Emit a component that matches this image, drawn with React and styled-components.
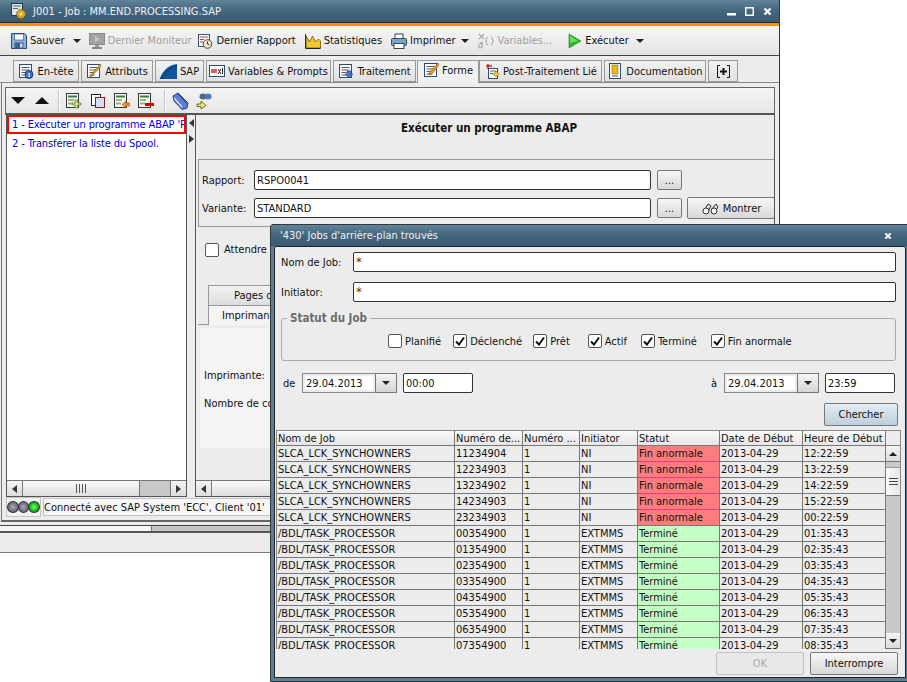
import React from 'react'
import styled, { createGlobalStyle } from 'styled-components'

const Global = createGlobalStyle`
  html, body { margin: 0; padding: 0; background: #fff; }
  body { font-family: "DejaVu Sans Condensed", "Liberation Sans", sans-serif; font-size: 11px; color: #111; }
  #root { width: 907px; height: 682px; position: relative; overflow: hidden; }
`

const Desktop = styled.div`
  position: relative;
  width: 907px;
  height: 682px;
  overflow: hidden;
`

const MainWindow = styled.div`
  position: absolute;
  left: 0;
  top: 0;
  width: 780px;
  height: 553px;
  box-sizing: border-box;
  display: flex;
  flex-direction: column;
  background: #ececec;
  border-right: 1px solid #333;
  border-bottom: 1px solid #777;
`

const TitleBar = styled.div`
  height: ${p => p.$h}px;
  flex: none;
  display: flex;
  align-items: center;
  gap: 6px;
  box-sizing: border-box;
  padding: 0 ${p => p.$pr}px 0 ${p => p.$pl}px;
  margin: 0 ${p => p.$mx || 0}px;
  background: linear-gradient(#628499, #46687f 45%, #375a72);
  color: #eef2f5;
  font-size: 11px;
  border-bottom: ${p => (p.$line ? '1px solid #1d2b35' : 'none')};
`

const TitleText = styled.span`
  flex: 1;
  white-space: nowrap;
`

const WinButtons = styled.div`
  display: flex;
  align-items: center;
  gap: 9px;
  margin-right: ${p => p.$mr || 0}px;
`

const OrangeLine = styled.div`
  height: 3px;
  flex: none;
  background: #ff9000;
`

const Toolbar = styled.div`
  height: 30px;
  flex: none;
  box-sizing: border-box;
  display: flex;
  align-items: center;
  padding-left: 11px;
  border-bottom: 1px solid #444;
  background: linear-gradient(#f6f6f6, #e4e4e4);
`

const ToolItem = styled.div`
  display: flex;
  align-items: center;
  gap: 3px;
  margin-right: ${p => p.$mr}px;
  white-space: nowrap;
  color: ${p => (p.$off ? '#a0a0a0' : '#111')};
`

const Caret = styled.span`
  width: 0;
  height: 0;
  flex: none;
  margin-right: ${p => p.$mr || 0}px;
  border-left: 4px solid transparent;
  border-right: 4px solid transparent;
  border-top: 4px solid #222;
`

const TabStrip = styled.div`
  height: 27px;
  flex: none;
  box-sizing: border-box;
  display: flex;
  align-items: flex-end;
  padding-left: 13px;
  gap: 2px;
  border-bottom: 1px solid #888;
`

const Tab = styled.div`
  height: ${p => (p.$active ? 23 : 22)}px;
  width: ${p => p.$w}px;
  margin-bottom: ${p => (p.$active ? -1 : 0)}px;
  margin-right: ${p => (p.$active ? -2 : 0)}px;
  margin-left: ${p => (p.$active ? -1 : 0)}px;
  box-sizing: border-box;
  display: flex;
  align-items: center;
  justify-content: center;
  gap: 3px;
  padding-bottom: ${p => (p.$active ? 4 : 0)}px;
  border: 1px solid #999;
  border-bottom: ${p => (p.$active ? 'none' : '1px solid #999')};
  background: ${p => (p.$active ? '#f0f0f0' : 'linear-gradient(#f2f2f2, #e0e0e0)')};
  white-space: nowrap;
  position: relative;
  z-index: ${p => (p.$active ? 1 : 0)};
`

const TabBody = styled.div`
  height: 439px;
  flex: none;
  box-sizing: border-box;
  display: flex;
  flex-direction: column;
  margin-left: 1px;
  padding: 4px 4px 0 3px;
  border-left: 1px solid #777;
  border-bottom: 2px solid #666;
`

const InnerToolbar = styled.div`
  height: 28px;
  flex: none;
  box-sizing: border-box;
  display: flex;
  align-items: center;
  border: 1px solid #666;
  border-bottom: 2px solid #555;
  background: linear-gradient(#f4f4f4, #e6e6e6);
`

const IconSlot = styled.div`
  width: ${p => p.$w}px;
  display: flex;
  justify-content: center;
  flex: none;
`

const Sep = styled.div`
  width: 1px;
  height: 22px;
  flex: none;
  margin: 0 ${p => p.$mr}px 0 ${p => p.$ml}px;
  background: #c4c4c4;
  border-right: 1px solid #fff;
`

const Panes = styled.div`
  height: 382px;
  flex: none;
  display: flex;
`

const LeftPane = styled.div`
  width: 181px;
  flex: none;
  box-sizing: border-box;
  display: flex;
  flex-direction: column;
  border: 1px solid #555;
  border-top: none;
  margin-left: 1px;
  background: #fff;
`

const TaskList = styled.div`
  flex: 1;
  min-height: 0;
  overflow: hidden;
  background: #fff;
`

const TaskRow = styled.div`
  height: ${p => (p.$selected ? 19 : 16)}px;
  box-sizing: border-box;
  display: flex;
  align-items: center;
  padding-left: ${p => (p.$selected ? 3 : 5)}px;
  margin-bottom: ${p => (p.$selected ? 1 : 0)}px;
  border: ${p => (p.$selected ? '2px solid #f00' : 'none')};
  color: #0000e6;
  letter-spacing: -0.12px;
  white-space: nowrap;
  overflow: hidden;
`

const Splitter = styled.div`
  width: 8px;
  flex: none;
  display: flex;
  flex-direction: column;
  align-items: center;
  gap: 8px;
  padding-top: 4px;
  box-sizing: border-box;
`

const SmallTri = styled.span`
  width: 0;
  height: 0;
  border-top: 4px solid transparent;
  border-bottom: 4px solid transparent;
  ${p => (p.$right ? 'border-left: 5px solid #333;' : 'border-right: 5px solid #333;')}
`

const RightPane = styled.div`
  flex: 1;
  min-width: 0;
  box-sizing: border-box;
  display: flex;
  flex-direction: column;
  border: 1px solid #555;
  border-top: none;
`

const PaneBody = styled.div`
  flex: 1;
  min-height: 0;
  overflow: hidden;
  display: flex;
  flex-direction: column;
`

const PaneTitle = styled.div`
  height: 44px;
  flex: none;
  box-sizing: border-box;
  padding-top: 6px;
  text-align: center;
  font-weight: bold;
  font-size: 11.5px;
  margin-left: 8px;
`

const ReportBox = styled.div`
  height: 68px;
  flex: none;
  box-sizing: border-box;
  margin-left: 2px;
  padding: 10px 0 0 3px;
  border: 1px solid #999;
  border-right: none;
  display: flex;
  flex-direction: column;
  gap: 8px;
`

const FormRow = styled.div`
  display: flex;
  align-items: center;
  height: 20px;
`

const RowLabel = styled.div`
  width: ${p => p.$w}px;
  flex: none;
  white-space: nowrap;
`

const TextInput = styled.div`
  width: ${p => p.$w}px;
  flex: none;
  height: 20px;
  box-sizing: border-box;
  display: flex;
  align-items: ${p => (p.$star ? 'flex-start' : 'center')};
  padding: ${p => (p.$star ? '1px 2px 0' : '0 2px')};
  background: #fff;
  border: 1px solid #333;
  border-radius: 2px;
  font-size: ${p => (p.$star ? 13 : 11)}px;
  color: ${p => (p.$star ? '#5a3a10' : '#111')};
`

const Btn = styled.div`
  width: ${p => p.$w}px;
  height: ${p => p.$h}px;
  flex: none;
  margin-left: ${p => p.$ml || 0}px;
  box-sizing: border-box;
  display: flex;
  align-items: center;
  justify-content: center;
  gap: 4px;
  border: 1px solid ${p => (p.$off ? '#c2c2c2' : '#777')};
  border-radius: 2px;
  background: ${p =>
    p.$primary
      ? 'linear-gradient(#e2edf5, #bccfdc)'
      : p.$off
        ? '#e8e8e8'
        : 'linear-gradient(#f6f6f6, #d8d8d8)'};
  color: ${p => (p.$off ? '#a8a8a8' : '#111')};
`

const WaitRow = styled.div`
  height: 58px;
  width: 75px;
  flex: none;
  display: flex;
  align-items: flex-start;
  gap: 5px;
  padding: 16px 0 0 9px;
  box-sizing: border-box;
  white-space: nowrap;
  overflow: hidden;
`

const SubTabs = styled.div`
  flex: none;
  display: flex;
  flex-direction: column;
  margin-left: 2px;
  padding-left: 10px;
  position: relative;
  &::after {
    content: '';
    position: absolute;
    left: 0;
    bottom: 0;
    width: 10px;
    height: 1px;
    background: #999;
  }
`

const SubTab = styled.div`
  height: 20px;
  box-sizing: border-box;
  width: 65px;
  padding: 3px 0 0 ${p => p.$pl}px;
  border: 1px solid #999;
  border-bottom: none;
  background: ${p => (p.$front ? '#f4f4f4' : 'linear-gradient(#f2f2f2, #dcdcdc)')};
  white-space: nowrap;
  overflow: hidden;
`

const SubBody = styled.div`
  height: 120px;
  width: 71px;
  flex: none;
  box-sizing: border-box;
  padding: 41px 0 0 4px;
  display: flex;
  flex-direction: column;
  gap: 15px;
  margin: 3px 0 0 4px;
  background: #f4f4f4;
  white-space: nowrap;
  overflow: hidden;
`

const HScroll = styled.div`
  height: 16px;
  flex: none;
  display: flex;
  background: #c8c8c8;
  border-top: 1px solid #777;
  box-sizing: border-box;
`

const ScrollBtn = styled.div`
  width: 15px;
  flex: none;
  display: flex;
  align-items: center;
  justify-content: center;
  background: linear-gradient(#f4f4f4, #dcdcdc);
  border-right: ${p => (p.$end ? 'none' : '1px solid #777')};
  border-left: ${p => (p.$end ? '1px solid #777' : 'none')};
`

const HThumb = styled.div`
  width: ${p => p.$w}px;
  flex: none;
  display: flex;
  align-items: center;
  justify-content: center;
  gap: 2px;
  background: linear-gradient(#fafafa, #dedede);
  border-right: 1px solid #777;
`

const Grip = styled.span`
  width: 1px;
  height: 9px;
  background: #555;
`

const HTrack = styled.div`
  flex: 1;
`

const StatusBar = styled.div`
  height: 20px;
  flex: none;
  display: flex;
  align-items: center;
  gap: 2px;
  margin-left: 1px;
  box-sizing: border-box;
`

const Lights = styled.div`
  width: 35px;
  height: 20px;
  flex: none;
  box-sizing: border-box;
  display: flex;
  align-items: center;
  justify-content: center;
  background: #f2f2f2;
  border: 1px solid #c4c4c4;
`

const Light = styled.span`
  width: 10px;
  height: 10px;
  border-radius: 50%;
  margin-left: ${p => (p.$first ? 0 : -1)}px;
  border: 1px solid #333;
  background: ${p => (p.$on ? 'radial-gradient(#7f7, #0a0 70%)' : 'radial-gradient(#aab, #667 70%)')};
`

const StatusText = styled.div`
  flex: 1;
  height: 18px;
  box-sizing: border-box;
  display: flex;
  align-items: center;
  padding-left: 0;
  background: #f6f6f6;
  border: 1px solid #c4c4c4;
  white-space: nowrap;
  color: #111;
`

const BottomScroll = styled.div`
  height: 5px;
  flex: none;
  margin-top: 3px;
  display: flex;
  background: #c4c4c4;
  border-top: 1px solid #444;
  border-bottom: 2px solid #555;
`

const BottomThumb = styled.div`
  width: 151px;
  background: #f6f6f6;
  border-right: 1px solid #777;
`

const Dialog = styled.div`
  position: absolute;
  left: 270px;
  top: 224px;
  width: 640px;
  height: 458px;
  box-sizing: border-box;
  display: flex;
  flex-direction: column;
  padding: 0 3px 3px;
  background: #5c7d93;
  border: 1px solid #2c3a44;
  border-radius: 3px 3px 0 0;
`

const DialogBody = styled.div`
  flex: 1;
  min-height: 0;
  display: flex;
  flex-direction: column;
  padding: 5px 7px 0 6px;
  background: #ececec;
  border: 1px solid #222;
  border-radius: 2px 2px 0 0;
`

const DialogRow = styled(FormRow)`
  margin-bottom: 10px;
`

const StatusGroup = styled.fieldset`
  width: 615px;
  height: 49px;
  box-sizing: border-box;
  margin: 0;
  padding: 0;
  border: 1px solid #aaa;
  border-radius: 3px;
`

const Legend = styled.legend`
  font-weight: bold;
  font-size: 11.5px;
  color: #6c6c6c;
  padding: 0 3px;
  margin-left: 5px;
  line-height: 12px;
`

const Checks = styled.div`
  display: flex;
  align-items: center;
  padding: 10px 0 0 106px;
`

const CheckItem = styled.label`
  display: flex;
  align-items: center;
  gap: 3px;
  margin-right: ${p => p.$mr}px;
  white-space: nowrap;
`

const Box = styled.span`
  width: 14px;
  height: 14px;
  flex: none;
  box-sizing: border-box;
  display: flex;
  align-items: center;
  justify-content: center;
  background: #fff;
  border: 1px solid #555;
  border-radius: 2px;
`

const DateRow = styled.div`
  display: flex;
  align-items: center;
  height: 20px;
  margin-top: 12px;
`

const DateLabel = styled.span`
  width: ${p => p.$w}px;
  margin-left: ${p => p.$ml || 0}px;
  flex: none;
`

const Combo = styled.div`
  width: 95px;
  height: 20px;
  flex: none;
  box-sizing: border-box;
  display: flex;
  align-items: center;
  border: 1px solid #888;
  background: #ececec;
`

const ComboValue = styled.div`
  flex: 1;
  height: 14px;
  margin-left: 2px;
  padding-left: 1px;
  background: #fff;
  display: flex;
  align-items: center;
  margin-right: 2px;
`

const ComboBtn = styled.div`
  width: 22px;
  height: 20px;
  flex: none;
  box-sizing: border-box;
  display: flex;
  align-items: center;
  justify-content: center;
  border: 1px solid #777;
  margin-right: -1px;
  background: linear-gradient(#f4f4f4, #d4d4d4);
`

const TimeInput = styled(TextInput)`
  margin-left: 6px;
`

const SearchRow = styled.div`
  display: flex;
  justify-content: flex-end;
  height: 23px;
  margin-top: 10px;
`

const TableWrap = styled.div`
  width: 625px;
  height: 219px;
  flex: none;
  margin: 4px 0 0 -5px;
  display: flex;
  box-sizing: border-box;
  border: 1px solid #888;
  border-bottom: none;
  overflow: hidden;
`

const TableGrid = styled.div`
  flex: none;
  width: 609px;
  overflow: hidden;
`

const Line = styled.div`
  display: flex;
  height: ${p => (p.$head ? 15 : 16)}px;
  box-sizing: border-box;
  border-bottom: 1px solid #777;
  background: ${p => (p.$head ? 'linear-gradient(#fafafa, #e6e6e6)' : '#ececec')};
`

const Cell = styled.div`
  width: ${p => p.$w}px;
  flex: none;
  box-sizing: border-box;
  padding-left: 1px;
  line-height: 15px;
  white-space: nowrap;
  overflow: hidden;
  border-right: 1px solid #777;
  background: ${p => (p.$state === 'bad' ? '#ff7c7c' : p.$state === 'ok' ? '#c4ffc4' : 'transparent')};
`

const VScroll = styled.div`
  flex: 1;
  display: flex;
  flex-direction: column;
  background: #c8c8c8;
`

const VHead = styled.div`
  height: 14px;
  flex: none;
  background: #ececec;
  border-bottom: 1px solid #777;
`

const VBtn = styled.div`
  height: 16px;
  flex: none;
  box-sizing: border-box;
  display: flex;
  align-items: center;
  justify-content: center;
  background: linear-gradient(#f4f4f4, #dcdcdc);
  border-bottom: 1px solid #777;
`

const VThumb = styled.div`
  height: 29px;
  flex: none;
  box-sizing: border-box;
  margin-top: 5px;
  display: flex;
  flex-direction: column;
  align-items: center;
  justify-content: center;
  gap: 2px;
  background: linear-gradient(90deg, #fafafa, #e6e6e6);
  border-top: 1px solid #999;
  border-bottom: 1px solid #777;
`

const HGrip = styled.span`
  width: 9px;
  height: 1px;
  background: #444;
`

const VTrack = styled.div`
  flex: 1;
`

const Footer = styled.div`
  display: flex;
  justify-content: flex-end;
  margin-top: 3px;
  gap: 6px;
`

const Tri = styled.span`
  width: 0;
  height: 0;
  border-left: 4px solid transparent;
  border-right: 4px solid transparent;
  ${p => (p.$up ? 'border-bottom: 4px solid #222;' : 'border-top: 4px solid #222;')}
`

const BigTri = styled.span`
  width: 0;
  height: 0;
  border-left: 7px solid transparent;
  border-right: 7px solid transparent;
  ${p => (p.$up ? 'border-bottom: 7px solid #111;' : 'border-top: 7px solid #111;')}
`

const IconSvg = styled.svg`
  flex: none;
  display: block;
`

function Ico({ w = 16, h = 16, children }) {
  return <IconSvg width={w} height={h} viewBox={`0 0 ${w} ${h}`}>{children}</IconSvg>
}

const SaveIcon = () => (
  <Ico>
    <path d="M.5.5h13l2 2v13H.5z" fill="#8fb0d8" stroke="#2c4a78" />
    <rect x="3.500" y="1" width="9" height="6" fill="#f4f7fb" stroke="#2c4a78" strokeWidth=".6" />
    <rect x="3.500" y="9.500" width="9" height="6" fill="#3c5f94" />
    <rect x="9" y="10.500" width="2.500" height="4" fill="#d4deec" />
  </Ico>
)
const MonitorIcon = () => (
  <Ico>
    <rect x=".5" y=".5" width="15" height="11" fill="#a2a2a2" stroke="#8a8a8a" />
    <path d="M6 2.500l5 3.500-5 3.500z" fill="#c4c4c4" />
    <rect x="6" y="12" width="4" height="2" fill="#9a9a9a" />
    <rect x="3" y="14" width="10" height="2" fill="#8a8a8a" />
  </Ico>
)
const ReportIcon = () => (
  <Ico>
    <rect x="1.500" y="1.500" width="11" height="12" fill="#fff" stroke="#39507a" />
    <path d="M3 4h8M3 6.500h4M3 9h3" stroke="#b04040" strokeWidth="1" />
    <circle cx="10.500" cy="11" r="4.300" fill="#f1e7c4" stroke="#444" />
    <path d="M10.500 8.500V11l2 1" stroke="#333" fill="none" />
  </Ico>
)
const StatsIcon = () => (
  <Ico>
    <path d="M1 15V3l3.500 6 3-6 3 6 3-3 2 2v7z" fill="#f0c828" stroke="#6a5008" strokeWidth=".8" />
    <path d="M.6 1v14.500h15" stroke="#222" fill="none" />
  </Ico>
)
const PrintIcon = () => (
  <Ico>
    <rect x="4" y="1" width="8" height="5" fill="#fff" stroke="#345" />
    <rect x=".5" y="5.500" width="15" height="7" rx="1" fill="#7fa2c8" stroke="#2c4a78" />
    <rect x="3" y="10.500" width="10" height="5" fill="#fff" stroke="#345" />
    <rect x="12" y="7" width="2" height="1.500" fill="#4d4" />
  </Ico>
)
const VarsIcon = () => (
  <Ico w={18} h={18}>
    <path d="M2 2l5 5M7 2l-5 5" stroke="#aaa" strokeWidth="1.200" />
    <path d="M3 11c3-2 3 5 0 5s-1-4 3-6" stroke="#aaa" fill="none" strokeWidth="1.200" />
    <path d="M11 5q-2 0-1.500 3q0 1-1 1q1 0 1 1q-.5 3 1.500 3M14 5q2 0 1.500 3q0 1 1 1q-1 0-1 1q.5 3-1.500 3" stroke="#aaa" fill="none" />
  </Ico>
)
const PlayIcon = () => (
  <Ico w={14} h={16}>
    <path d="M1 1l12 7-12 7z" fill="#2cb52c" stroke="#1a8a1a" strokeWidth=".6" />
    <path d="M2 3l8 5-8 2z" fill="#6fdc5c" />
  </Ico>
)
const DocLines = () => (
  <>
    <rect x="1.500" y="1.500" width="12" height="13" fill="#fff" stroke="#2c4a78" />
    <path d="M3.500 4.500h8M3.500 7h8M3.500 9.500h5M3.500 12h5" stroke="#556" />
  </>
)
const HeaderIcon = () => (
  <Ico>
    <DocLines />
    <circle cx="11" cy="11.500" r="4" fill="#3a70c0" stroke="#1d3f78" />
    <rect x="10.500" y="10" width="1.200" height="4" fill="#fff" />
  </Ico>
)
const AttrIcon = () => (
  <Ico>
    <DocLines />
    <path d="M14 1L5 12l-2 3 3-2 9-10z" fill="#e0b030" stroke="#7a5a10" strokeWidth=".7" />
  </Ico>
)
const SapIcon = () => (
  <Ico w={17} h={16}>
    <rect width="17" height="16" fill="#12569c" />
    <path d="M0 16C3 7 9 2 17 1V0H0z" fill="#e8f0f6" />
    <path d="M0 15C4 7 9 3 17 2v3C10 6 6 10 4 16H0z" fill="#0d4a8a" />
  </Ico>
)
const VarTabIcon = () => (
  <Ico>
    <rect x=".5" y="2.500" width="15" height="11" fill="#fff" stroke="#2c4a78" />
    <rect x="2" y="6" width="6" height="4" fill="#d86060" />
    <path d="M9 6l3 5M12 6l-3 5" stroke="#222" />
    <rect x="13" y="5" width="1" height="6" fill="#222" />
  </Ico>
)
const TraitIcon = () => (
  <Ico>
    <DocLines />
    <path d="M9 8h4v3h2l-4 4-4-4h2z" fill="#4a78c0" stroke="#234a88" strokeWidth=".6" />
  </Ico>
)
const FormIcon = () => (
  <Ico>
    <DocLines />
    <path d="M15 1L7 10l-1 3 3-1 7-9z" fill="#e8a030" stroke="#8a5a10" strokeWidth=".7" />
  </Ico>
)
const PostIcon = () => (
  <Ico>
    <path d="M2 2h6M4 0v5" stroke="#d02020" strokeWidth="1.500" transform="translate(0 1)" />
    <rect x="4.500" y="5.500" width="9" height="10" fill="#fff" stroke="#2c4a78" />
    <path d="M6 8h6M6 10.500h3" stroke="#556" />
    <path d="M12 8l3 3-3 3-3-3z" fill="#f0c830" stroke="#8a6a10" strokeWidth=".6" />
  </Ico>
)
const DocuIcon = () => (
  <Ico>
    <rect x="2.500" y=".5" width="11" height="15" fill="#fff" stroke="#2c4a78" />
    <rect x="5" y="2" width="6" height="9" fill="#e8b820" stroke="#8a6a10" strokeWidth=".6" />
    <path d="M5 13h6" stroke="#556" />
  </Ico>
)
const PlusBracket = () => (
  <Ico w={15} h={15}>
    <path d="M4 1.500H1.500v12H4M11 1.500h2.500v12H11" stroke="#111" fill="none" />
    <path d="M7.500 4v7M4 7.500h7" stroke="#111" strokeWidth="2" />
  </Ico>
)
const GridDoc = ({ children }) => (
  <Ico>
    <rect x=".5" y=".5" width="12" height="14" fill="#f8f8f8" stroke="#333" />
    <rect x="2" y="2.500" width="9" height="2" fill="#3c7c3c" />
    <rect x="2" y="6" width="6" height="2" fill="#9ab27a" />
    <rect x="2" y="9.500" width="5" height="2" fill="#9ab27a" />
    {children}
  </Ico>
)
const CopyIcon = () => (
  <Ico>
    <rect x="1.500" y="1.500" width="9" height="11" fill="#fff" stroke="#222" />
    <rect x="5.500" y="4.500" width="9" height="10" fill="#cfe0f4" stroke="#8c1c1c" />
  </Ico>
)
const BookIcon = () => (
  <Ico w={17} h={18}>
    <path d="M1 4l5-3 10 10-1 5-5 1.500L2 9z" fill="#5f7fd8" stroke="#24407a" />
    <path d="M2 6l8 9" stroke="#dfe8fa" strokeWidth="1.200" />
    <path d="M6 1.500l8.500 10" stroke="#24407a" />
  </Ico>
)
const RunStepIcon = () => (
  <Ico>
    <ellipse cx="7" cy="3.500" rx="3.500" ry="3" fill="#55657a" />
    <ellipse cx="12" cy="3.500" rx="3.500" ry="3" fill="#4a78b8" />
    <path d="M1 11h4V8l5 4.500L5 16v-2.500H1z" fill="#f8f050" stroke="#333" strokeWidth=".7" />
  </Ico>
)
const Glasses = () => (
  <Ico w={18} h={14}>
    <path d="M2 11l5-8 3 2-4 7zM10 9l5-6 2 3-4 6z" fill="#ddd" stroke="#333" />
    <circle cx="5" cy="10" r="3" fill="#fff" stroke="#333" />
    <circle cx="13" cy="10" r="3" fill="#fff" stroke="#333" />
  </Ico>
)
const Check = () => (
  <IconSvg width="10" height="10" viewBox="0 0 10 10">
    <path d="M1 5.500l3 3 5-7" stroke="#111" strokeWidth="2" fill="none" />
  </IconSvg>
)
const CloseX = ({ s = 9 }) => (
  <IconSvg width={s} height={s} viewBox="0 0 9 9">
    <path d="M1.500 1.500l6 6M7.500 1.500l-6 6" stroke="#fff" strokeWidth="2.200" />
  </IconSvg>
)
const JobIcon = () => (
  <Ico w={17} h={18}>
    <rect x="1.500" y="1.500" width="11" height="12" fill="#dfe6ee" stroke="#23384a" />
    <path d="M3 4h8M3 6.500h5" stroke="#567" />
    <circle cx="11" cy="12" r="4.500" fill="#e0a020" stroke="#7a5a10" strokeDasharray="1.500 1" />
    <circle cx="11" cy="12" r="1.500" fill="#fff2c0" />
  </Ico>
)

const tabs = [
  { label: 'En-tête', w: 66, icon: <HeaderIcon /> },
  { label: 'Attributs', w: 72, icon: <AttrIcon /> },
  { label: 'SAP', w: 49, icon: <SapIcon /> },
  { label: 'Variables & Prompts', w: 125, icon: <VarTabIcon /> },
  { label: 'Traitement', w: 83, icon: <TraitIcon /> },
  { label: 'Forme', w: 62, icon: <FormIcon />, active: true },
  { label: 'Post-Traitement Lié', w: 123, icon: <PostIcon /> },
  { label: 'Documentation', w: 102, icon: <DocuIcon /> },
  { label: '', w: 30, icon: <PlusBracket /> },
]

const columns = [178, 68, 57, 58, 82, 83, 83]

const bad = ['11234904|12:22:59', '12234903|13:22:59', '13234902|14:22:59', '14234903|15:22:59', '23234903|00:22:59']
const rows = [
  ...bad.map(s => {
    const [num, time] = s.split('|')
    return { job: 'SLCA_LCK_SYNCHOWNERS', num, init: 'NI', status: 'Fin anormale', state: 'bad', time }
  }),
  ...[0, 1, 2, 3, 4, 5, 6, 7].map(i => ({
    job: '/BDL/TASK_PROCESSOR',
    num: `0${i}354900`,
    init: 'EXTMMS',
    status: 'Terminé',
    state: 'ok',
    time: `0${i + 1}:35:43`,
  })),
]

const statuses = [
  { label: 'Planifié', mr: 12, on: false },
  { label: 'Déclenché', mr: 11, on: true },
  { label: 'Prêt', mr: 18, on: true },
  { label: 'Actif', mr: 14, on: true },
  { label: 'Terminé', mr: 14, on: true },
  { label: 'Fin anormale', mr: 0, on: true },
]

function App() {
  return (
    <Desktop>
      <Global />
      <MainWindow>
        <TitleBar $h={23} $pl={10} $pr={7} $line>
          <JobIcon />
          <TitleText>J001 - Job : MM.END.PROCESSING.SAP</TitleText>
          <WinButtons>
            <svg width="9" height="9" viewBox="0 0 9 9"><rect y="6" width="9" height="2.500" fill="#fff" /></svg>
            <svg width="9" height="9" viewBox="0 0 9 9"><rect x=".75" y=".75" width="7.500" height="7.500" fill="none" stroke="#fff" strokeWidth="1.500" /></svg>
            <CloseX />
          </WinButtons>
        </TitleBar>
        <OrangeLine />
        <Toolbar>
          <ToolItem $mr={8}><SaveIcon />Sauver</ToolItem>
          <Caret $mr={8} />
          <ToolItem $mr={6} $off><MonitorIcon />Dernier Moniteur</ToolItem>
          <ToolItem $mr={9}><ReportIcon />Dernier Rapport</ToolItem>
          <ToolItem $mr={9}><StatsIcon />Statistiques</ToolItem>
          <ToolItem $mr={5}><PrintIcon />Imprimer</ToolItem>
          <Caret $mr={8} />
          <ToolItem $mr={16} $off><VarsIcon />Variables...</ToolItem>
          <ToolItem $mr={7}><PlayIcon />Exécuter</ToolItem>
          <Caret />
        </Toolbar>
        <TabStrip>
          {tabs.map((t, i) => (
            <Tab key={i} $w={t.w} $active={t.active}>{t.icon}{t.label}</Tab>
          ))}
        </TabStrip>
        <TabBody>
          <InnerToolbar>
            <IconSlot $w={24}><BigTri /></IconSlot>
            <IconSlot $w={24}><BigTri $up /></IconSlot>
            <Sep $ml={4} $mr={2} />
            <IconSlot $w={24}><GridDoc><path d="M10 8h3v3h3v2h-3v3h-3v-3H7v-2h3z" transform="translate(-1 -1)" fill="#c0e070" stroke="#4a6a20" strokeWidth=".6" /></GridDoc></IconSlot>
            <IconSlot $w={24}><CopyIcon /></IconSlot>
            <IconSlot $w={24}><GridDoc><path d="M16 10h-4V8l-4 3.500 4 3.500v-2h4z" fill="#f09020" stroke="#a04a10" strokeWidth=".5" /></GridDoc></IconSlot>
            <IconSlot $w={24}><GridDoc><rect x="7" y="10" width="9" height="3" fill="#e00000" /></GridDoc></IconSlot>
            <Sep $ml={6} $mr={2} />
            <IconSlot $w={24}><BookIcon /></IconSlot>
            <IconSlot $w={24}><RunStepIcon /></IconSlot>
          </InnerToolbar>
          <Panes>
            <LeftPane>
              <TaskList>
                <TaskRow $selected>1 - Exécuter un programme ABAP 'RSPO0041'</TaskRow>
                <TaskRow>2 - Transférer la liste du Spool.</TaskRow>
              </TaskList>
              <HScroll>
                <ScrollBtn><SmallTri /></ScrollBtn>
                <HThumb $w={116}><Grip /><Grip /><Grip /><Grip /></HThumb>
                <HTrack />
                <ScrollBtn $end><SmallTri $right /></ScrollBtn>
              </HScroll>
            </LeftPane>
            <Splitter><SmallTri /><SmallTri $right /></Splitter>
            <RightPane>
              <PaneBody>
                <PaneTitle>Exécuter un programme ABAP</PaneTitle>
                <ReportBox>
                  <FormRow>
                    <RowLabel $w={52}>Rapport:</RowLabel>
                    <TextInput $w={397}>RSPO0041</TextInput>
                    <Btn $w={25} $h={20} $ml={6}>...</Btn>
                  </FormRow>
                  <FormRow>
                    <RowLabel $w={52}>Variante:</RowLabel>
                    <TextInput $w={397}>STANDARD</TextInput>
                    <Btn $w={25} $h={20} $ml={6}>...</Btn>
                    <Btn $w={88} $h={22} $ml={5}><Glasses />Montrer</Btn>
                  </FormRow>
                </ReportBox>
                <WaitRow><Box />Attendre la fin du job</WaitRow>
                <SubTabs>
                  <SubTab $pl={25}>Pages de garde</SubTab>
                  <SubTab $pl={13} $front>Imprimante</SubTab>
                </SubTabs>
                <SubBody>
                  <div>Imprimante:</div>
                  <div>Nombre de copies:</div>
                </SubBody>
              </PaneBody>
              <HScroll>
                <ScrollBtn><SmallTri /></ScrollBtn>
                <HThumb $w={300} />
                <HTrack />
              </HScroll>
            </RightPane>
          </Panes>
          <StatusBar>
            <Lights><Light $first /><Light /><Light $on /></Lights>
            <StatusText>Connecté avec SAP System 'ECC', Client '01'</StatusText>
          </StatusBar>
        </TabBody>
        <BottomScroll><BottomThumb /></BottomScroll>
      </MainWindow>

      <Dialog>
        <TitleBar $h={21} $pl={9} $pr={10} $mx={-3}>
          <TitleText>'430' Jobs d'arrière-plan trouvés</TitleText>
          <WinButtons $mr={7}><CloseX s={8} /></WinButtons>
        </TitleBar>
        <DialogBody>
          <DialogRow>
            <RowLabel $w={72}>Nom de Job:</RowLabel>
            <TextInput $star $w={543}>*</TextInput>
          </DialogRow>
          <DialogRow>
            <RowLabel $w={72}>Initiator:</RowLabel>
            <TextInput $star $w={543}>*</TextInput>
          </DialogRow>
          <StatusGroup>
            <Legend>Statut du Job</Legend>
            <Checks>
              {statuses.map(s => (
                <CheckItem key={s.label} $mr={s.mr}>
                  <Box>{s.on && <Check />}</Box>
                  {s.label}
                </CheckItem>
              ))}
            </Checks>
          </StatusGroup>
          <DateRow>
            <DateLabel $w={19} $ml={2}>de</DateLabel>
            <Combo><ComboValue>29.04.2013</ComboValue><ComboBtn><Tri /></ComboBtn></Combo>
            <TimeInput $w={70}>00:00</TimeInput>
            <DateLabel $w={13} $ml={238}>à</DateLabel>
            <Combo><ComboValue>29.04.2013</ComboValue><ComboBtn><Tri /></ComboBtn></Combo>
            <TimeInput $w={70}>23:59</TimeInput>
          </DateRow>
          <SearchRow>
            <Btn $w={74} $h={23} $primary>Chercher</Btn>
          </SearchRow>
          <TableWrap>
            <TableGrid>
              <Line $head>
                {['Nom de Job', 'Numéro de...', 'Numéro ...', 'Initiator', 'Statut', 'Date de Début', 'Heure de Début'].map((h, i) => (
                  <Cell key={h} $w={columns[i]}>{h}</Cell>
                ))}
              </Line>
              {rows.map(r => (
                <Line key={r.num}>
                  <Cell $w={columns[0]}>{r.job}</Cell>
                  <Cell $w={columns[1]}>{r.num}</Cell>
                  <Cell $w={columns[2]}>1</Cell>
                  <Cell $w={columns[3]}>{r.init}</Cell>
                  <Cell $w={columns[4]} $state={r.state}>{r.status}</Cell>
                  <Cell $w={columns[5]}>2013-04-29</Cell>
                  <Cell $w={columns[6]}>{r.time}</Cell>
                </Line>
              ))}
            </TableGrid>
            <VScroll>
              <VHead />
              <VBtn><Tri $up /></VBtn>
              <VThumb><HGrip /><HGrip /><HGrip /></VThumb>
              <VTrack />
              <VBtn><Tri /></VBtn>
            </VScroll>
          </TableWrap>
          <Footer>
            <Btn $w={88} $h={23} $off>OK</Btn>
            <Btn $w={88} $h={23}>Interrompre</Btn>
          </Footer>
        </DialogBody>
      </Dialog>
    </Desktop>
  )
}

export default App
